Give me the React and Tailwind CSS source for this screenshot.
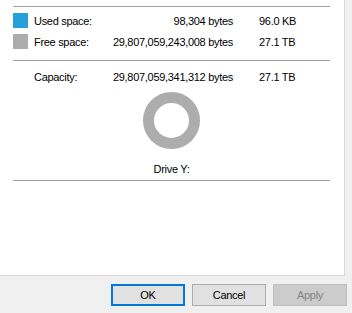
import React from 'react';

const font = { fontFamily: '"Liberation Sans", Arial, sans-serif' };

const rows = [
  { label: 'Used space:', bytes: '98,304 bytes', size: '96.0 KB', swatch: 'bg-[#26a0da]' },
  { label: 'Free space:', bytes: '29,807,059,243,008 bytes', size: '27.1 TB', swatch: 'bg-[#adadad]' },
];

const SpaceRow = ({ label, bytes, size, swatch }) => (
  <div className="grid h-[21px] grid-cols-[21px_76px_123px_26px_1fr] items-center">
    <div>{swatch && <div className={`h-[15px] w-[15px] ${swatch}`} />}</div>
    <span>{label}</span>
    <span className="text-right">{bytes}</span>
    <span />
    <span>{size}</span>
  </div>
);

const Donut = () => (
  <svg width="57" height="57" viewBox="0 0 57 57">
    <circle cx="28.5" cy="28.5" r="23" fill="none" stroke="#adadad" strokeWidth="11" />
  </svg>
);

const App = () => {
  return (
    <div
      className="flex h-[313px] w-[352px] flex-col bg-[#f0f0f0] text-[11px] leading-[14px] tracking-[-0.3px] text-black"
      style={font}
    >
      <div className="box-border h-[276px] w-[345px] border-b border-r border-[#d9d9d9] bg-white pl-[13px] pr-[14px] pt-[6px]">
        <div className="h-px bg-[#a0a0a0]" />

        <div className="mt-[3px]">
          {rows.map((row) => (
            <SpaceRow key={row.label} {...row} />
          ))}
        </div>

        <div className="mt-[8px] h-px bg-[#a0a0a0]" />

        <div className="mt-[5px]">
          <SpaceRow label="Capacity:" bytes="29,807,059,341,312 bytes" size="27.1 TB" />
        </div>

        <div className="mt-[5px] flex justify-center">
          <Donut />
        </div>

        <div className="mt-[13px] text-center">Drive Y:</div>

        <div className="mt-[4px] h-px bg-[#a0a0a0]" />
      </div>

      <div className="flex justify-end gap-[7px] pr-[5px] pt-[8px]">
        <button className="box-border h-[22px] w-[74px] border-2 border-[#0078d7] bg-[#e1e1e1]">
          OK
        </button>
        <button className="box-border h-[22px] w-[74px] border border-[#adadad] bg-[#e1e1e1]">
          Cancel
        </button>
        <button className="box-border h-[22px] w-[74px] border border-[#bfbfbf] bg-[#cccccc] text-[#838383]">
          Apply
        </button>
      </div>
    </div>
  );
};

export default App;
